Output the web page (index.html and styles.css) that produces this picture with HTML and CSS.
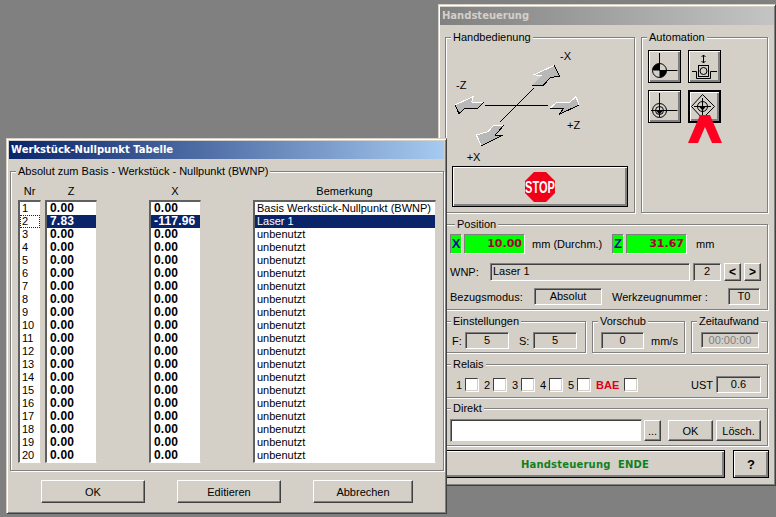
FILE: index.html
```html
<!DOCTYPE html>
<html>
<head>
<meta charset="utf-8">
<title>Handsteuerung</title>
<link rel="stylesheet" href="styles.css">
</head>
<body>

<!-- hintergrund fenster -->
<div class="window hand-window">
  <div class="titlebar inactive">Handsteuerung</div>

  <div class="row top-row">
    <div class="group hand-group">
      <div class="group-title">Handbedienung</div>
      <svg class="axes" viewBox="0 0 570 372" width="190" height="124">
        <path d="M120 196.500H308M166 245L267 144" stroke="#000" stroke-width="3" fill="none"/>
        <g class="arrow">
          <polygon points="268,104 328,76 344,108 316,113 295,136 262,136 290,108"/>
          <polyline class="hi" points="290,108 268,104 328,76"/>
          <polyline class="lo" points="328,76 344,108 316,113 295,136 262,136"/>
        </g>
        <g class="arrow">
          <polygon points="30,195 84,170 80,186 115,187 100,204 58,206 42,221"/>
          <polyline class="hi" points="30,195 84,170 80,186 115,187"/>
          <polyline class="lo" points="115,187 100,204 58,206 42,221 30,195"/>
        </g>
        <g class="arrow">
          <polygon points="315,205 335,187 375,186 393,170 402,195 343,223 355,206"/>
          <polyline class="hi" points="315,205 335,187 375,186 393,170 402,195"/>
          <polyline class="lo" points="402,195 343,223 355,206 315,205"/>
        </g>
        <g class="arrow">
          <polygon points="94,285 129,275 144,258 176,256 151,285 169,287 109,317"/>
          <polyline class="hi" points="109,317 94,285 129,275 144,258 176,256"/>
          <polyline class="lo" points="176,256 151,285 169,287 109,317"/>
        </g>
        <text x="345" y="60">-X</text>
        <text x="33" y="146">-Z</text>
        <text x="366" y="267">+Z</text>
        <text x="65" y="362">+X</text>
      </svg>
      <button class="btn default stop-btn">
        <svg viewBox="0 0 30 30" width="30" height="30">
          <polygon points="9,0 21,0 30,9 30,21 21,30 9,30 0,21 0,9" fill="#f00018"/>
          <text class="stop-text" transform="translate(15 20.500) scale(.92 1.35)">STOP</text>
        </svg>
      </button>
    </div>

    <div class="group auto-group">
      <div class="group-title">Automation</div>
      <div class="auto-grid">
        <button class="btn default icon-btn">
          <svg viewBox="0 0 33 33" width="33" height="33">
            <path d="M11.500 3V20.500H29.500" class="ico"/>
            <circle cx="11.500" cy="20.500" r="7" class="ico"/>
            <path d="M11.500 20.500V13.500A7 7 0 0 0 4.500 20.500ZM11.500 20.500V27.500A7 7 0 0 0 18.500 20.500Z"/>
          </svg>
        </button>
        <button class="btn default icon-btn">
          <svg viewBox="0 0 33 33" width="33" height="33">
            <path d="M15.500 5V13M13.500 7L15.500 5L17.500 7M13.500 11L15.500 13L17.500 11" class="ico"/>
            <rect x="10.500" y="15.500" width="10" height="11" class="ico"/>
            <circle cx="15.500" cy="21" r="3.500" class="ico"/>
            <path d="M4 21.500H8.500V28.500H22.500V21.500H29" class="ico"/>
          </svg>
        </button>
        <button class="btn default icon-btn">
          <svg viewBox="0 0 33 33" width="33" height="33">
            <path d="M11.500 3V27M3 20.500H29.500" class="ico"/>
            <circle cx="11.500" cy="20.500" r="7" class="ico"/>
            <circle cx="11.500" cy="20.500" r="4" class="ico"/>
            <path d="M8 20.500H15L11.500 24.500Z"/>
          </svg>
        </button>
        <button class="btn default icon-btn selected">
          <svg viewBox="0 0 33 33" width="33" height="33">
            <path d="M14.500 4.500L26.500 16.500L14.500 28.500L3.500 16.500Z" class="ico"/>
            <path d="M14.500 8V25M6 16.500H23" class="ico"/>
            <circle cx="14.500" cy="16.500" r="5" class="ico"/>
            <path d="M11 16.500H18L14.500 20.500Z"/>
          </svg>
          <svg class="red-mark" viewBox="0 0 34 28" width="34" height="28">
            <polygon points="0,28 12,0 22,0 34,28 24,28 17,12 10,28"/>
          </svg>
        </button>
      </div>
    </div>
  </div>

  <div class="group pos-group">
    <div class="group-title">Position</div>
    <div class="row pos-row1">
      <div class="axis-box">X</div>
      <div class="axis-val">10.00</div>
      <div class="pos-unit">mm (Durchm.)</div>
      <div class="axis-box">Z</div>
      <div class="axis-val">31.67</div>
      <div class="pos-unit2">mm</div>
    </div>
    <div class="row pos-row2">
      <div class="lbl-wnp">WNP:</div>
      <div class="field wnp-name">Laser 1</div>
      <div class="field wnp-nr">2</div>
      <button class="btn step-btn">&lt;</button>
      <button class="btn step-btn">&gt;</button>
    </div>
    <div class="row pos-row3">
      <div class="lbl-bez">Bezugsmodus:</div>
      <div class="field bez-val">Absolut</div>
      <div class="lbl-wz">Werkzeugnummer :</div>
      <div class="field wz-val">T0</div>
    </div>
  </div>

  <div class="row set-row">
    <div class="group ein-group">
      <div class="group-title">Einstellungen</div>
      <div class="row set-inner">
        <span class="lbl-f">F:</span>
        <div class="field set-val">5</div>
        <span class="lbl-s">S:</span>
        <div class="field set-val">5</div>
      </div>
    </div>
    <div class="group vor-group">
      <div class="group-title">Vorschub</div>
      <div class="row set-inner">
        <div class="field vor-val">0</div>
        <span class="vor-unit">mm/s</span>
      </div>
    </div>
    <div class="group zeit-group">
      <div class="group-title">Zeitaufwand</div>
      <div class="row set-inner">
        <div class="field zeit-val">00:00:00</div>
      </div>
    </div>
  </div>

  <div class="group relais-group">
    <div class="group-title">Relais</div>
    <div class="row relais-row">
      <span class="rel-nr">1</span><span class="check"></span>
      <span class="rel-nr">2</span><span class="check"></span>
      <span class="rel-nr">3</span><span class="check"></span>
      <span class="rel-nr">4</span><span class="check"></span>
      <span class="rel-nr">5</span><span class="check"></span>
      <span class="rel-bae">BAE</span><span class="check"></span>
      <span class="rel-ust">UST</span>
      <div class="field ust-val">0.6</div>
    </div>
  </div>

  <div class="group direkt-group">
    <div class="group-title">Direkt</div>
    <div class="row direkt-row">
      <div class="direkt-input"></div>
      <button class="btn dots-btn">...</button>
      <button class="btn ok-small">OK</button>
      <button class="btn del-btn">Lösch.</button>
    </div>
  </div>

  <div class="row end-row">
    <button class="btn default end-btn">Handsteuerung&nbsp; ENDE</button>
    <button class="btn default help-btn">?</button>
  </div>
</div>

<!-- vordergrund fenster -->
<div class="window table-window">
  <div class="titlebar active">Werkstück-Nullpunkt Tabelle</div>
  <div class="group table-group">
    <div class="group-title">Absolut zum Basis - Werkstück - Nullpunkt (BWNP)</div>
    <div class="columns">
      <div class="col col-nr">
        <div class="col-head">Nr</div>
        <div class="list">
          <div>1</div><div class="focus">2</div><div>3</div><div>4</div><div>5</div>
          <div>6</div><div>7</div><div>8</div><div>9</div><div>10</div>
          <div>11</div><div>12</div><div>13</div><div>14</div><div>15</div>
          <div>16</div><div>17</div><div>18</div><div>19</div><div>20</div>
        </div>
      </div>
      <div class="col col-val">
        <div class="col-head">Z</div>
        <div class="list bold">
          <div>0.00</div><div class="sel">7.83</div><div>0.00</div><div>0.00</div><div>0.00</div>
          <div>0.00</div><div>0.00</div><div>0.00</div><div>0.00</div><div>0.00</div>
          <div>0.00</div><div>0.00</div><div>0.00</div><div>0.00</div><div>0.00</div>
          <div>0.00</div><div>0.00</div><div>0.00</div><div>0.00</div><div>0.00</div>
        </div>
      </div>
      <div class="col col-val col-x">
        <div class="col-head">X</div>
        <div class="list bold">
          <div>0.00</div><div class="sel">-117.96</div><div>0.00</div><div>0.00</div><div>0.00</div>
          <div>0.00</div><div>0.00</div><div>0.00</div><div>0.00</div><div>0.00</div>
          <div>0.00</div><div>0.00</div><div>0.00</div><div>0.00</div><div>0.00</div>
          <div>0.00</div><div>0.00</div><div>0.00</div><div>0.00</div><div>0.00</div>
        </div>
      </div>
      <div class="col col-bem">
        <div class="col-head">Bemerkung</div>
        <div class="list">
          <div>Basis Werkstück-Nullpunkt (BWNP)</div><div class="sel">Laser 1</div><div>unbenutzt</div><div>unbenutzt</div><div>unbenutzt</div>
          <div>unbenutzt</div><div>unbenutzt</div><div>unbenutzt</div><div>unbenutzt</div><div>unbenutzt</div>
          <div>unbenutzt</div><div>unbenutzt</div><div>unbenutzt</div><div>unbenutzt</div><div>unbenutzt</div>
          <div>unbenutzt</div><div>unbenutzt</div><div>unbenutzt</div><div>unbenutzt</div><div>unbenutzt</div>
        </div>
      </div>
    </div>
  </div>
  <div class="row table-buttons">
    <button class="btn dlg-btn">OK</button>
    <button class="btn dlg-btn">Editieren</button>
    <button class="btn dlg-btn dlg-last">Abbrechen</button>
  </div>
</div>

</body>
</html>
```

FILE: styles.css
```css
* {
  box-sizing: border-box;
}

body {
  margin: 0;
  width: 776px;
  height: 517px;
  overflow: hidden;
  position: relative;
  background-color: #808080;
  font-family: "Liberation Sans", Arial, sans-serif;
  font-size: 11px;
  line-height: 14px;
  color: #000;
}

.row {
  display: flex;
  align-items: center;
}

/* fenster */
.window {
  position: absolute;
  background-color: #d4d0c8;
  border: 1px solid;
  border-color: #d4d0c8 #404040 #404040 #d4d0c8;
  box-shadow: inset 1px 1px 0 #fff, inset -1px -1px 0 #808080;
}

.hand-window {
  left: 438px;
  top: 4px;
  width: 338px;
  height: 482px;
  padding: 2px 1px;
}

.table-window {
  left: 6px;
  top: 138px;
  width: 441px;
  height: 376px;
  padding: 2px;
}

.titlebar {
  height: 18px;
  padding-left: 2px;
  font-family: "DejaVu Sans", sans-serif;
  font-weight: bold;
  font-size: 10px;
  line-height: 18px;
}

.inactive {
  background: linear-gradient(to right, #808080, #c4c4c4);
  color: #d4d0c8;
}

.active {
  background: linear-gradient(to right, #0a246a, #a6caf0);
  color: #fff;
}

/* gruppen */
.group {
  border: 1px solid #808080;
  box-shadow: inset 1px 1px 0 #fff, 1px 1px 0 #fff;
}

.group-title {
  display: table;
  margin: -8px 0 0 5px;
  padding: 0 2px;
  background-color: #d4d0c8;
}

/* knoepfe */
.btn {
  display: block;
  margin: 0;
  padding: 0;
  font-family: inherit;
  font-size: 11px;
  color: #000;
  background-color: #d4d0c8;
  border: 1px solid;
  border-color: #fff #404040 #404040 #fff;
  box-shadow: inset -1px -1px 0 #808080;
}

.default {
  border: 1px solid #000;
  box-shadow: inset 1px 1px 0 #fff, inset -2px -2px 0 #808080;
}

/* sunken felder */
.field {
  height: 17px;
  text-align: center;
  line-height: 15px;
  border: 1px solid;
  border-color: #808080 #fff #fff #808080;
  box-shadow: inset 1px 1px 0 #404040;
}

/* rechtes fenster */
.top-row {
  margin: 12px 0 0 5px;
  align-items: flex-start;
}

.hand-group {
  width: 190px;
  height: 176px;
}

.axes {
  display: block;
  margin: -4px 0 0 -1px;
}

.axes text {
  font-size: 33px;
}

.axes path,
.arrow polygon,
.arrow polyline {
  shape-rendering: crispEdges;
}

.arrow polygon {
  fill: #b8b8b8;
}

.arrow polyline {
  fill: none;
  stroke-width: 3;
}

.arrow .hi {
  stroke: #fff;
}

.arrow .lo {
  stroke: #000;
}

.stop-btn {
  width: 176px;
  height: 41px;
  margin: 2px 0 0 6px;
}

.stop-btn svg {
  display: block;
  margin: 0 auto;
}

.stop-text {
  font-family: "Liberation Sans", sans-serif;
  font-weight: bold;
  font-size: 12px;
  fill: #fff;
  text-anchor: middle;
}

.auto-group {
  width: 127px;
  height: 176px;
  margin-left: 6px;
}

.auto-grid {
  display: grid;
  grid-template-columns: 33px 33px;
  gap: 7px;
  margin: 6px 0 0 6px;
}

.icon-btn {
  position: relative;
  width: 33px;
  height: 33px;
}

.icon-btn svg {
  display: block;
  margin: -1px;
}

.ico {
  fill: none;
  stroke: #000;
}

.selected {
  border-width: 2px;
}

.selected svg {
  margin: -2px;
}

.icon-btn .red-mark {
  position: absolute;
  left: -2px;
  top: 23px;
  margin: 0;
  fill: #ff0020;
}

.pos-group {
  width: 323px;
  height: 86px;
  margin: 11px 0 0 5px;
  padding-left: 4px;
}

.pos-row1 {
  height: 20px;
  margin-top: 3px;
}

.axis-box {
  width: 12px;
  height: 20px;
  background-color: #00ff00;
  color: #101090;
  font-weight: bold;
  font-size: 13px;
  line-height: 18px;
  text-align: center;
  border: 1px solid;
  border-color: #808080 #fff #fff #808080;
}

.axis-val {
  width: 61px;
  height: 20px;
  margin-left: 2px;
  padding-right: 2px;
  background-color: #00ff00;
  color: #a80030;
  font-family: "DejaVu Sans", sans-serif;
  font-weight: bold;
  font-size: 11px;
  line-height: 18px;
  text-align: right;
  border: 1px solid;
  border-color: #808080 #fff #fff #808080;
}

.pos-unit {
  width: 87px;
  padding-left: 7px;
}

.pos-unit2 {
  padding-left: 9px;
}

.pos-row2 {
  height: 18px;
  margin-top: 9px;
}

.lbl-wnp {
  width: 40px;
}

.wnp-name {
  width: 200px;
  height: 18px;
  padding-left: 2px;
  text-align: left;
}

.wnp-nr {
  width: 28px;
  height: 18px;
  margin-left: 3px;
}

.step-btn {
  width: 17px;
  height: 18px;
  margin-left: 3px;
  font-weight: bold;
  font-size: 12px;
  line-height: 14px;
}

.pos-row3 {
  height: 17px;
  margin-top: 7px;
}

.lbl-bez {
  width: 84px;
}

.bez-val {
  width: 68px;
}

.lbl-wz {
  width: 116px;
  margin-left: 10px;
}

.wz-val {
  width: 32px;
}

.set-row {
  align-items: flex-start;
  gap: 6px;
  margin: 11px 0 0 5px;
}

.set-row .group {
  height: 32px;
}

.ein-group {
  width: 141px;
}

.vor-group {
  width: 93px;
}

.zeit-group {
  width: 77px;
}

.set-inner {
  margin-top: 4px;
}

.lbl-f {
  margin-left: 6px;
  width: 13px;
}

.lbl-s {
  width: 24px;
  padding-left: 10px;
}

.set-val {
  width: 44px;
}

.vor-val {
  width: 43px;
  margin-left: 8px;
}

.vor-unit {
  margin-left: 7px;
}

.zeit-val {
  width: 58px;
  height: 16px;
  margin-left: 9px;
  color: #808080;
}

.relais-group {
  width: 323px;
  height: 34px;
  margin: 11px 0 0 5px;
}

.relais-row {
  margin-top: 5px;
  height: 17px;
}

.rel-nr {
  width: 9px;
  margin-left: 3px;
  text-align: right;
}

.rel-nr:first-child {
  margin-left: 7px;
}

.check {
  width: 13px;
  height: 13px;
  margin-left: 3px;
  background-color: #fff;
  border: 1px solid;
  border-color: #404040 #d4d0c8 #d4d0c8 #404040;
  box-shadow: 1px 1px 0 #fff;
}

.rel-bae {
  width: 25px;
  margin-left: 6px;
  color: #e00018;
  font-weight: bold;
}

.rel-ust {
  margin-left: 54px;
  width: 25px;
}

.ust-val {
  width: 45px;
}

.direkt-group {
  width: 323px;
  height: 38px;
  margin: 10px 0 0 5px;
}

.direkt-row {
  margin: 4px 0 0 4px;
}

.direkt-input {
  width: 192px;
  height: 23px;
  background-color: #fff;
  border: 1px solid;
  border-color: #808080 #d4d0c8 #d4d0c8 #808080;
  box-shadow: inset 1px 1px 0 #404040;
}

.dots-btn {
  width: 17px;
  height: 21px;
  margin-left: 2px;
}

.ok-small {
  width: 45px;
  height: 21px;
  margin-left: 7px;
}

.del-btn {
  width: 45px;
  height: 21px;
  margin-left: 3px;
}

.end-row {
  margin: 4px 0 0 5px;
  align-items: flex-start;
}

.end-btn {
  width: 280px;
  height: 28px;
  color: #108020;
  font-family: "DejaVu Sans", sans-serif;
  font-weight: bold;
  font-size: 10px;
  letter-spacing: 0.2px;
}

.help-btn {
  width: 36px;
  height: 28px;
  margin-left: 8px;
  font-weight: bold;
  font-size: 13px;
}

/* linkes fenster */
.table-group {
  width: 434px;
  height: 300px;
  margin: 12px 0 0 1px;
}

.columns {
  display: flex;
  padding-left: 7px;
  margin-top: 6px;
}

.col-nr {
  width: 23px;
}

.col-val {
  width: 52px;
  margin-left: 4px;
}

.col-x {
  margin-left: 52px;
}

.col-bem {
  width: 183px;
  margin-left: 52px;
}

.col-head {
  height: 14px;
  text-align: center;
}

.list {
  height: 263px;
  margin-top: 2px;
  background-color: #fff;
  border-style: solid;
  border-width: 2px 1px 1px 2px;
  border-color: #606060 #d4d0c8 #fff #606060;
}

.list div {
  height: 13px;
  padding-left: 2px;
  line-height: 13px;
  white-space: nowrap;
}

.bold {
  font-size: 12px;
  font-weight: bold;
  letter-spacing: 0.2px;
}

.bold div {
  padding-left: 3px;
}

.sel {
  background-color: #0a246a;
  color: #fff;
}

.list .focus {
  outline: 1px dotted #0a246a;
  outline-offset: -1px;
}

.table-buttons {
  margin: 9px 0 0 32px;
  gap: 32px;
}

.dlg-btn {
  width: 104px;
  height: 23px;
}

.dlg-last {
  width: 100px;
}
```
